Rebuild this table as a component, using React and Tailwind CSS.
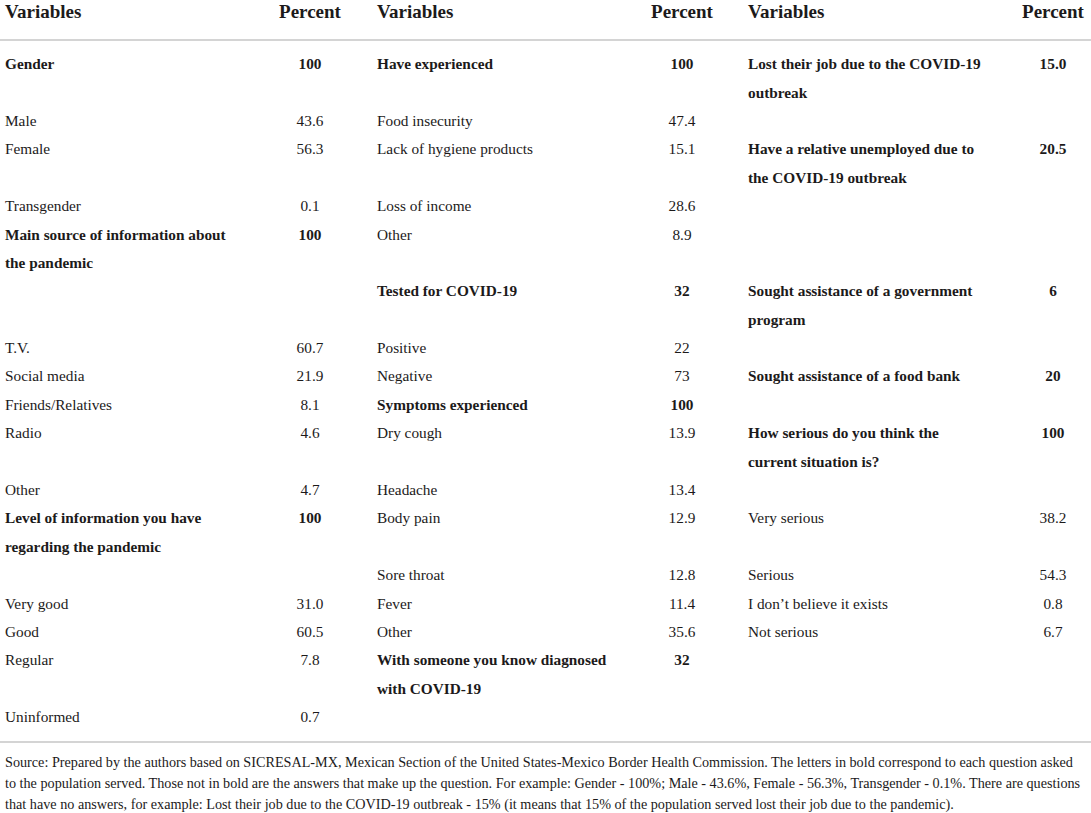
import React from "react";

const B = true;
const col1 = [
  ["Gender", "100", B],
  null,
  ["Male", "43.6"],
  ["Female", "56.3"],
  null,
  ["Transgender", "0.1"],
  ["Main source of information about", "100", B],
  ["the pandemic", "", B],
  null,
  null,
  ["T.V.", "60.7"],
  ["Social media", "21.9"],
  ["Friends/Relatives", "8.1"],
  ["Radio", "4.6"],
  null,
  ["Other", "4.7"],
  ["Level of information you have", "100", B],
  ["regarding the pandemic", "", B],
  null,
  ["Very good", "31.0"],
  ["Good", "60.5"],
  ["Regular", "7.8"],
  null,
  ["Uninformed", "0.7"],
];

const col2 = [
  ["Have experienced", "100", B],
  null,
  ["Food insecurity", "47.4"],
  ["Lack of hygiene products", "15.1"],
  null,
  ["Loss of income", "28.6"],
  ["Other", "8.9"],
  null,
  ["Tested for COVID-19", "32", B],
  null,
  ["Positive", "22"],
  ["Negative", "73"],
  ["Symptoms experienced", "100", B],
  ["Dry cough", "13.9"],
  null,
  ["Headache", "13.4"],
  ["Body pain", "12.9"],
  null,
  ["Sore throat", "12.8"],
  ["Fever", "11.4"],
  ["Other", "35.6"],
  ["With someone you know diagnosed", "32", B],
  ["with COVID-19", "", B],
  null,
];

const col3 = [
  ["Lost their job due to the COVID-19", "15.0", B],
  ["outbreak", "", B],
  null,
  ["Have a relative unemployed due to", "20.5", B],
  ["the COVID-19 outbreak", "", B],
  null,
  null,
  null,
  ["Sought assistance of a government", "6", B],
  ["program", "", B],
  null,
  ["Sought assistance of a food bank", "20", B],
  null,
  ["How serious do you think the", "100", B],
  ["current situation is?", "", B],
  null,
  ["Very serious", "38.2"],
  null,
  ["Serious", "54.3"],
  ["I don\u2019t believe it exists", "0.8"],
  ["Not serious", "6.7"],
  null,
  null,
  null,
];

function Rows({ data, valueW }) {
  return (
    <div className="flex flex-col">
      {data.map((r, i) => (
        <div key={i} className="h-[28.4px] flex items-center">
          {r ? (
            <>
              <div className={"flex-1 whitespace-nowrap " + (r[2] ? "font-bold" : "")}>{r[0]}</div>
              <div className={valueW + " text-center " + (r[2] ? "font-bold" : "")}>{r[1]}</div>
            </>
          ) : null}
        </div>
      ))}
    </div>
  );
}

function Head({ valueW }) {
  return (
    <div className="flex items-start h-[26px] text-[19px] font-bold leading-[22px]">
      <div className="flex-1">Variables</div>
      <div className={valueW + " text-center"}>Percent</div>
    </div>
  );
}

export default function App() {
  return (
    <div
      className="w-[1091px] h-[813px] bg-white text-[#1c1a1a] overflow-hidden"
      style={{ fontFamily: '"Liberation Serif", "Times New Roman", serif' }}
    >
      <div className="grid grid-cols-[360px_370px_361px] pt-[1px]">
        <div className="pl-[5px] pr-[10px]"><Head valueW="w-[80px]" /></div>
        <div className="pl-[17px] pr-[8px]"><Head valueW="w-[80px]" /></div>
        <div className="pl-[18px]"><Head valueW="w-[76px]" /></div>
      </div>
      <div className="mt-[12px] h-[2px] bg-[#d4d4d4]" />
      <div className="grid grid-cols-[360px_370px_361px] pt-[9px] text-[15.3px] leading-[20px]">
        <div className="pl-[5px] pr-[10px]"><Rows data={col1} valueW="w-[80px]" /></div>
        <div className="pl-[17px] pr-[8px]"><Rows data={col2} valueW="w-[80px]" /></div>
        <div className="pl-[18px]"><Rows data={col3} valueW="w-[76px]" /></div>
      </div>
      <div className="mt-[10px] h-[2px] bg-[#d4d4d4]" />
      <div className="pl-[5px] pt-[9px] text-[14.2px] leading-[21px] whitespace-nowrap">
        Source: Prepared by the authors based on SICRESAL-MX, Mexican Section of the United States-Mexico Border Health Commission. The letters in bold correspond to each question asked
        <br />
        to the population served. Those not in bold are the answers that make up the question. For example: Gender - 100%; Male - 43.6%, Female - 56.3%, Transgender - 0.1%. There are questions
        <br />
        that have no answers, for example: Lost their job due to the COVID-19 outbreak - 15% (it means that 15% of the population served lost their job due to the pandemic).
      </div>
    </div>
  );
}
